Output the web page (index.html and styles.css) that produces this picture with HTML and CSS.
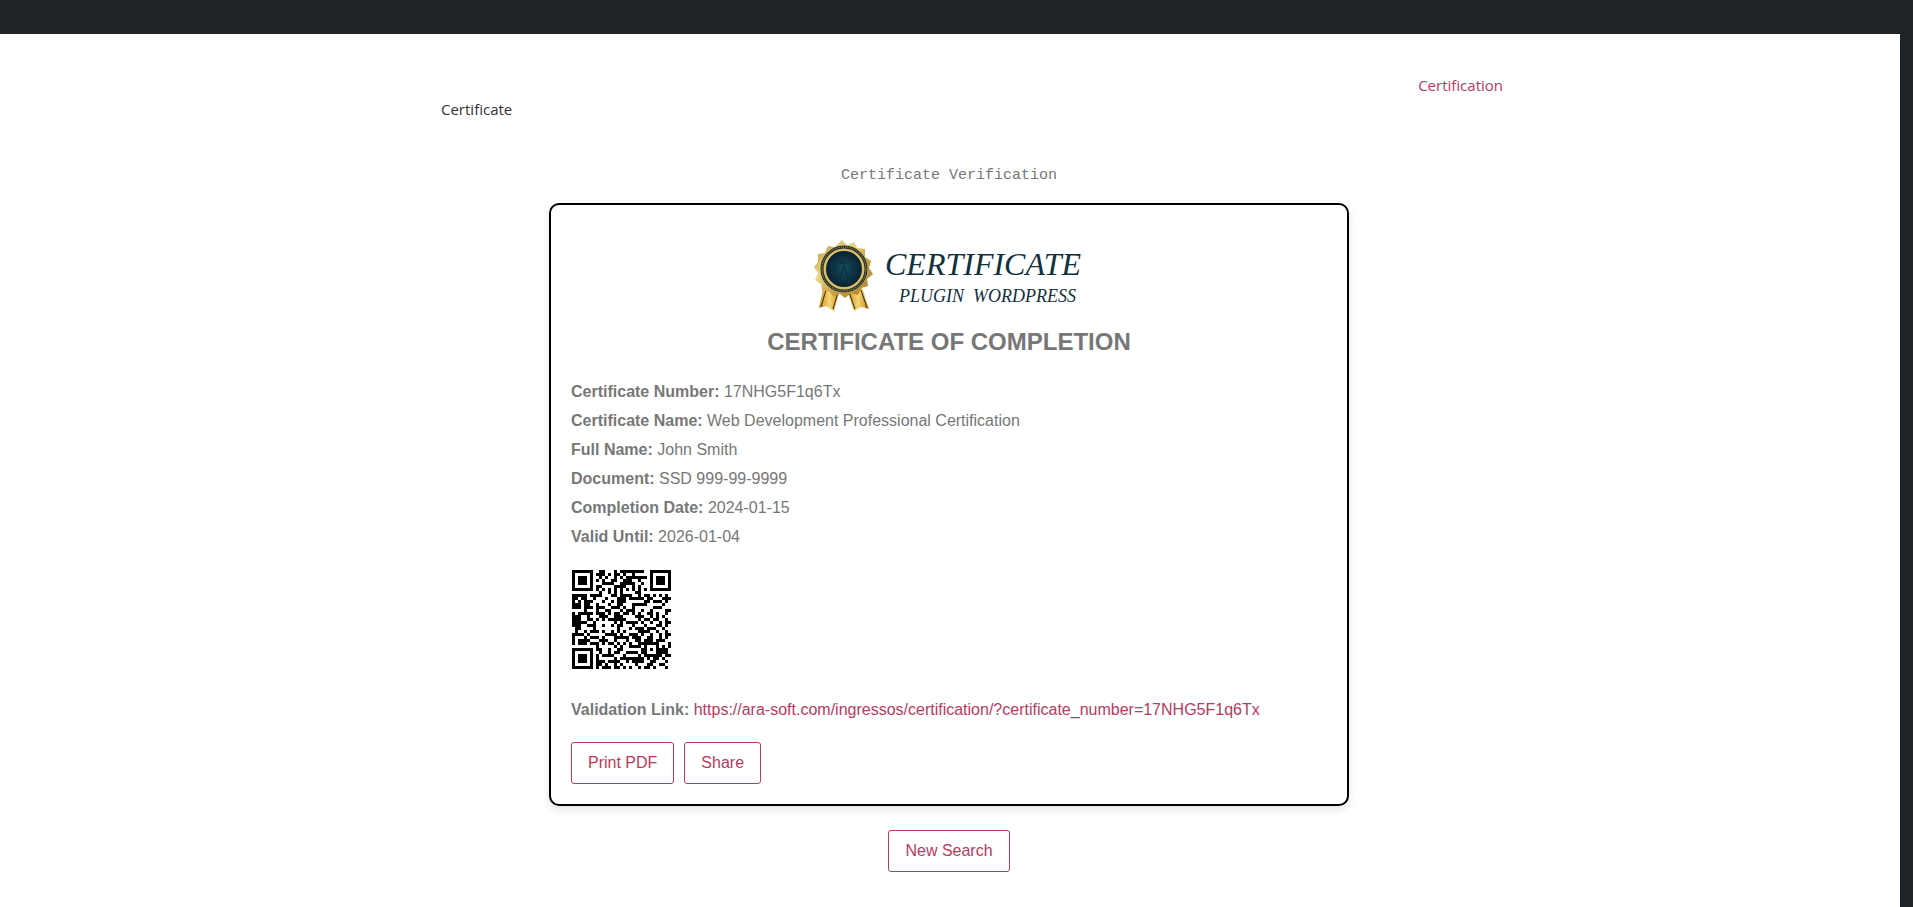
FILE: index.html
```html
<!DOCTYPE html>
<html lang="en">
<head>
  <meta charset="UTF-8" />
  <meta name="viewport" content="width=device-width, initial-scale=1" />
  <title>Certificate Verification</title>
  <link rel="stylesheet" href="styles.css">
</head>
<body>

<div class="admin-bar"></div>

<div class="page">
  <header class="site-header">
    <span class="site-title">Certificate</span>
    <nav class="site-nav">
      <a href="#">Certification</a>
    </nav>
  </header>

  <main>
    <p class="intro">Certificate Verification</p>

    <div class="certificate">
      <svg class="logo" width="280" height="80" viewBox="0 0 280 80" role="img" aria-label="Certificate Plugin WordPress">
        <defs>
          <linearGradient id="gold" x1="0" y1="0" x2="1" y2="1">
            <stop offset="0" stop-color="#b58a2e" />
            <stop offset="0.35" stop-color="#ecd888" />
            <stop offset="0.6" stop-color="#c9a043" />
            <stop offset="1" stop-color="#a87c20" />
          </linearGradient>
          <linearGradient id="ribbon" x1="0" y1="0" x2="1" y2="0">
            <stop offset="0" stop-color="#c98a12" />
            <stop offset="0.5" stop-color="#f6d677" />
            <stop offset="1" stop-color="#c98a12" />
          </linearGradient>
          <radialGradient id="seal">
            <stop offset="0" stop-color="#174e61" />
            <stop offset="1" stop-color="#08212f" />
          </radialGradient>
        </defs>
        <path d="M15 50 L10 73 L17 71 L25 76 L31 54 Z" fill="url(#ribbon)" />
        <path d="M52 50 L60 74 L52 72 L45 76 L38 54 Z" fill="url(#ribbon)" />
        <path d="M17 55 L12 72 M29 57 L24 74 M40 57 L46 74 M52 55 L58 73" stroke="#3a2c10" stroke-width="1" fill="none" />
        <path d="M33 5 L38 10 L45 7 L48 13 L56 14 L56 22 L62 26 L60 33 L64 39 L58 44 L59 51 L52 53 L49 60 L42 58 L36 63 L31 59 L24 61 L20 56 L13 56 L12 49 L6 45 L9 38 L5 32 L9 27 L9 19 L16 18 L19 11 L26 12 Z" fill="url(#gold)" />
        <circle cx="35" cy="34" r="24" fill="#d9bd67" />
        <circle cx="35" cy="34" r="22" fill="none" stroke="#243029" stroke-width="3" />
        <circle cx="35" cy="34" r="22" fill="none" stroke="#cdb163" stroke-width="1" stroke-dasharray="1 1" />
        <circle cx="35" cy="34" r="18" fill="url(#seal)" />
        <path d="M23 28 L30 45 L35 32 L40 45 L46 27 M22 28 H28 M31 28 H37" stroke="#0d3443" stroke-width="2" fill="none" />
        <text class="logo-name" x="76" y="40">CERTIFICATE</text>
        <text class="logo-tag" x="90" y="67">PLUGIN&#160; WORDPRESS</text>
      </svg>

      <h2>CERTIFICATE OF COMPLETION</h2>

      <p><strong>Certificate Number:</strong> 17NHG5F1q6Tx</p>
      <p><strong>Certificate Name:</strong> Web Development Professional Certification</p>
      <p><strong>Full Name:</strong> John Smith</p>
      <p><strong>Document:</strong> SSD 999-99-9999</p>
      <p><strong>Completion Date:</strong> 2024-01-15</p>
      <p><strong>Valid Until:</strong> 2026-01-04</p>

      <svg class="qr" id="qr" width="99" height="99" viewBox="0 0 33 33" shape-rendering="crispEdges" role="img" aria-label="QR code"></svg>

      <p><strong>Validation Link:</strong> <a id="link" href="https://ara-soft.com/ingressos/certification/?certificate_number=17NHG5F1q6Tx">https://ara-soft.com/ingressos/certification/?certificate_number=17NHG5F1q6Tx</a></p>

      <div class="actions">
        <button type="button">Print PDF</button>
        <button type="button">Share</button>
      </div>
    </div>

    <div class="search">
      <button type="button">New Search</button>
    </div>
  </main>
</div>

<script src="qr.js"></script>
</body>
</html>
```

FILE: styles.css
```css
* { box-sizing: border-box; }
body {
  margin: 0;
  min-height: 100vh;
  display: flex;
  flex-direction: column;
  background-color: #1d2327;
  color: #777;
  font-family: Arial, "Liberation Sans", sans-serif;
  font-size: 16px;
  line-height: 24px;
}
a {
  color: #b83a5e;
  text-decoration: none;
}
.admin-bar {
  height: 34px;
}
.page {
  flex: 1;
  margin-right: 13px;
  padding: 0 22px 0 20px;
  background-color: #fff;
}
.site-header {
  display: flex;
  justify-content: space-between;
  max-width: 1108px;
  margin: 0 auto;
  padding: 39px 0 0 46px;
  font-family: "Segoe UI", "Open Sans", sans-serif;
  font-size: 15px;
}
.site-title {
  padding-top: 24px;
  color: #333;
}
.intro {
  margin: 43px 0 15px;
  text-align: center;
  font-family: Consolas, "Liberation Mono", monospace;
  font-size: 15px;
}
.certificate {
  max-width: 800px;
  margin: 0 auto;
  padding: 20px;
  border: 2px solid #000;
  border-radius: 10px;
  box-shadow: 0 4px 8px rgba(0,0,0,0.1);
}
.certificate p {
  margin: 0 0 5px;
}
.logo {
  display: block;
  margin: 10px auto 0;
}
.logo text {
  fill: #12303d;
  font-family: "Lucida Calligraphy", "Liberation Serif", serif;
  font-style: italic;
}
.logo-name {
  font-size: 32px;
}
.logo-tag {
  font-size: 18px;
}
h2 {
  margin: 15px 0 26px;
  text-align: center;
  font-size: 24px;
  line-height: 24px;
}
.certificate .qr {
  display: block;
  margin: 21px 1px 29px;
}
.actions {
  display: flex;
  gap: 10px;
  margin-top: 20px;
}
button {
  padding: 8px 16px;
  border: 1px solid #b83a5e;
  border-radius: 3px;
  background: transparent;
  color: #b83a5e;
  font: inherit;
  cursor: pointer;
}
.search {
  padding: 24px 0 32px;
  text-align: center;
}
```

FILE: qr.js
```js
// QR code of the validation link: version 4, level L, byte mode
const SIZE = 33;
const DATA_LEN = 80;
const EC_LEN = 20;

function multiply(a, b) {
  let r = 0;
  for (let i = 7; i >= 0; i--) {
    r = (r << 1) ^ ((r >> 7) * 0x11d);
    r ^= ((b >> i) & 1) * a;
  }
  return r;
}

function codewords(text) {
  let bits = "0100" + text.length.toString(2).padStart(8, "0");
  for (const c of text) bits += c.charCodeAt(0).toString(2).padStart(8, "0");
  bits += "0000";
  const data = bits.match(/.{8}/g).map(b => parseInt(b, 2));
  for (let pad = 0xec; data.length < DATA_LEN; pad ^= 0xec ^ 0x11) data.push(pad);

  // Reed-Solomon
  const gen = new Array(EC_LEN).fill(0);
  gen[EC_LEN - 1] = 1;
  let root = 1;
  for (let i = 0; i < EC_LEN; i++) {
    for (let j = 0; j < EC_LEN; j++) {
      gen[j] = multiply(gen[j], root);
      if (j + 1 < EC_LEN) gen[j] ^= gen[j + 1];
    }
    root = multiply(root, 2);
  }
  const ec = new Array(EC_LEN).fill(0);
  for (const b of data) {
    const factor = b ^ ec.shift();
    ec.push(0);
    gen.forEach((g, i) => ec[i] ^= multiply(g, factor));
  }
  return data.concat(ec);
}

const masks = [
  (x, y) => (x + y) % 2 === 0,
  (x, y) => y % 2 === 0,
  (x, y) => x % 3 === 0,
  (x, y) => (x + y) % 3 === 0,
  (x, y) => (Math.floor(x / 3) + Math.floor(y / 2)) % 2 === 0,
  (x, y) => x * y % 2 + x * y % 3 === 0,
  (x, y) => (x * y % 2 + x * y % 3) % 2 === 0,
  (x, y) => ((x + y) % 2 + x * y % 3) % 2 === 0
];

function build(words, mask) {
  const m = Array.from({ length: SIZE }, () => new Array(SIZE).fill(null));
  const set = (x, y, v) => { if (x >= 0 && y >= 0 && x < SIZE && y < SIZE) m[y][x] = v; };

  for (let i = 0; i < SIZE; i++) {
    set(6, i, i % 2 === 0);
    set(i, 6, i % 2 === 0);
  }
  for (const [cx, cy] of [[3, 3], [SIZE - 4, 3], [3, SIZE - 4]]) {
    for (let dy = -4; dy <= 4; dy++) {
      for (let dx = -4; dx <= 4; dx++) {
        const d = Math.max(Math.abs(dx), Math.abs(dy));
        set(cx + dx, cy + dy, d !== 2 && d !== 4);
      }
    }
  }
  for (let dy = -2; dy <= 2; dy++) {
    for (let dx = -2; dx <= 2; dx++) {
      set(26 + dx, 26 + dy, Math.max(Math.abs(dx), Math.abs(dy)) !== 1);
    }
  }

  // format bits, level L = 01
  const format = 8 | mask;
  let rem = format;
  for (let i = 0; i < 10; i++) rem = (rem << 1) ^ ((rem >> 9) * 0x537);
  const bits = (format << 10 | rem) ^ 0x5412;
  const bit = i => ((bits >> i) & 1) === 1;
  for (let i = 0; i <= 5; i++) set(8, i, bit(i));
  set(8, 7, bit(6));
  set(8, 8, bit(7));
  set(7, 8, bit(8));
  for (let i = 9; i < 15; i++) set(14 - i, 8, bit(i));
  for (let i = 0; i < 8; i++) set(SIZE - 1 - i, 8, bit(i));
  for (let i = 8; i < 15; i++) set(8, SIZE - 15 + i, bit(i));
  set(8, SIZE - 8, true);

  let n = 0;
  for (let right = SIZE - 1; right >= 1; right -= 2) {
    if (right === 6) right = 5;
    for (let v = 0; v < SIZE; v++) {
      for (let j = 0; j < 2; j++) {
        const x = right - j;
        const y = ((right + 1) & 2) === 0 ? SIZE - 1 - v : v;
        if (m[y][x] !== null) continue;
        const dark = n < words.length * 8 && ((words[n >> 3] >> (7 - (n & 7))) & 1) === 1;
        m[y][x] = dark !== masks[mask](x, y);
        n++;
      }
    }
  }
  return m;
}

function penalty(m) {
  let score = 0;
  let dark = 0;
  const lines = m.map(r => r.map(v => v ? 1 : 0).join(""));
  for (let x = 0; x < SIZE; x++) lines.push(m.map(r => r[x] ? 1 : 0).join(""));
  for (const line of lines) {
    for (const run of line.match(/0{5,}|1{5,}/g) || []) score += run.length - 2;
    for (let i = 0; i + 11 <= SIZE; i++) {
      const part = line.substr(i, 11);
      if (part === "10111010000" || part === "00001011101") score += 40;
    }
  }
  for (let y = 0; y < SIZE; y++) {
    for (let x = 0; x < SIZE; x++) {
      if (m[y][x]) dark++;
      if (y && x && m[y][x] === m[y - 1][x] && m[y][x] === m[y][x - 1] && m[y][x] === m[y - 1][x - 1]) score += 3;
    }
  }
  return score + Math.floor(Math.abs(dark * 20 / (SIZE * SIZE) - 10)) * 10;
}

const words = codewords(document.getElementById("link").textContent);
const best = masks
  .map((_, i) => build(words, i))
  .reduce((a, b) => penalty(b) < penalty(a) ? b : a);

let d = "";
best.forEach((row, y) => row.forEach((v, x) => { if (v) d += `M${x} ${y}h1v1h-1z`; }));
document.getElementById("qr").innerHTML = `<path d="${d}" />`;
```
